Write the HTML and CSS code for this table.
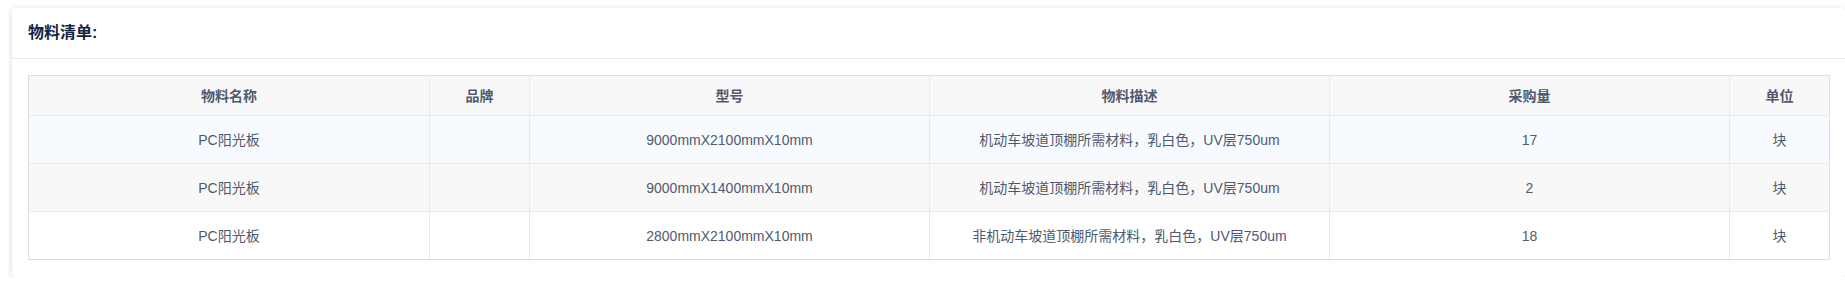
FILE: index.html
```html
<!DOCTYPE html>
<html lang="zh-CN">
<head>
<meta charset="utf-8">
<title>物料清单</title>
<link rel="stylesheet" href="styles.css">
</head>
<body>
<div class="card">
  <div class="card-head">物料清单:</div>
  <div class="card-body">
    <table class="bom">
      <colgroup>
        <col class="c-name"><col class="c-brand"><col class="c-model"><col class="c-desc"><col class="c-qty"><col class="c-unit">
      </colgroup>
      <thead>
        <tr><th>物料名称</th><th>品牌</th><th>型号</th><th>物料描述</th><th>采购量</th><th>单位</th></tr>
      </thead>
      <tbody>
        <tr class="hl"><td>PC阳光板</td><td></td><td>9000mmX2100mmX10mm</td><td>机动车坡道顶棚所需材料，乳白色，UV层750um</td><td>17</td><td>块</td></tr>
        <tr class="stripe"><td>PC阳光板</td><td></td><td>9000mmX1400mmX10mm</td><td>机动车坡道顶棚所需材料，乳白色，UV层750um</td><td>2</td><td>块</td></tr>
        <tr><td>PC阳光板</td><td></td><td>2800mmX2100mmX10mm</td><td>非机动车坡道顶棚所需材料，乳白色，UV层750um</td><td>18</td><td>块</td></tr>
      </tbody>
    </table>
  </div>
</div>
</body>
</html>
```

FILE: styles.css
```css
html, body {
  margin: 0;
  padding: 0;
  background: #ffffff;
}
body {
  padding: 8px 0 0 12px;
  font-family: "Liberation Sans", "Noto Sans CJK SC", sans-serif;
  color: #515a6e;
  font-size: 14px;
}
.card {
  background: #fff;
  border-radius: 4px;
  box-shadow: 0 1px 6px rgba(0, 0, 0, 0.15);
  width: 1833px;
}
.card-head {
  height: 50px;
  line-height: 50px;
  padding: 0 16px;
  font-size: 16px;
  font-weight: bold;
  color: #17233d;
  border-bottom: 1px solid #e8eaec;
}
.card-body {
  padding: 16px 16px 17px;
}
.bom {
  width: 1801px;
  border-collapse: collapse;
  table-layout: fixed;
  border: 1px solid #dcdee2;
}
.c-name { width: 401px; }
.c-brand { width: 100px; }
.c-model { width: 400px; }
.c-desc { width: 400px; }
.c-qty { width: 400px; }
.c-unit { width: 100px; }
.bom th, .bom td {
  text-align: center;
  border: 1px solid #e8eaec;
  padding: 0 8px;
  font-size: 14px;
  line-height: 20px;
}
.bom th {
  height: 39px;
  background: #f8f8f9;
  font-weight: bold;
  color: #515a6e;
  border-top-color: #dcdee2;
}
.bom td {
  height: 47px;
  color: #515a6e;
}
.bom tr > :first-child { border-left-color: #dcdee2; }
.bom tr > :last-child { border-right-color: #dcdee2; }
.bom tbody tr:last-child td { border-bottom-color: #dcdee2; }
.bom tr.hl td { background: #f7fbff; }
.bom tr.stripe td { background: #f8f8f9; }
```
